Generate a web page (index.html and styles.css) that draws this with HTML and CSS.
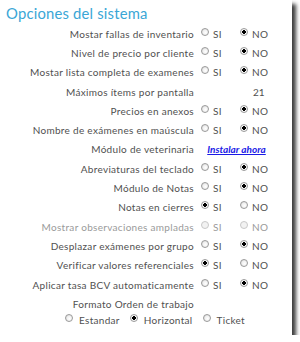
FILE: index.html
```html
<!DOCTYPE html>
<html lang="es">
<head>
<meta charset="utf-8">
<title>Opciones del sistema</title>
<link rel="stylesheet" href="styles.css">
</head>
<body>
<div class="panel">
  <h1 class="title">Opciones del sistema</h1>
  <div class="grid">
    <div class="label">Mostar fallas de inventario</div>
    <label class="opt"><input type="radio" name="r1"><span>SI</span></label>
    <label class="opt"><input type="radio" name="r1" checked><span>NO</span></label>

    <div class="label">Nivel de precio por cliente</div>
    <label class="opt"><input type="radio" name="r2"><span>SI</span></label>
    <label class="opt"><input type="radio" name="r2" checked><span>NO</span></label>

    <div class="label">Mostar lista completa de examenes</div>
    <label class="opt"><input type="radio" name="r3"><span>SI</span></label>
    <label class="opt"><input type="radio" name="r3" checked><span>NO</span></label>

    <div class="label">Máximos ítems por pantalla</div>
    <div></div>
    <div class="num">21</div>

    <div class="label">Precios en anexos</div>
    <label class="opt"><input type="radio" name="r5"><span>SI</span></label>
    <label class="opt"><input type="radio" name="r5" checked><span>NO</span></label>

    <div class="label">Nombre de exámenes en maúscula</div>
    <label class="opt"><input type="radio" name="r6"><span>SI</span></label>
    <label class="opt"><input type="radio" name="r6" checked><span>NO</span></label>

    <div class="label">Módulo de veterinaria</div>
    <div class="span2"><a class="install" href="#">Instalar ahora</a></div>

    <div class="label">Abreviaturas del teclado</div>
    <label class="opt"><input type="radio" name="r8"><span>SI</span></label>
    <label class="opt"><input type="radio" name="r8" checked><span>NO</span></label>

    <div class="label">Módulo de Notas</div>
    <label class="opt"><input type="radio" name="r9"><span>SI</span></label>
    <label class="opt"><input type="radio" name="r9" checked><span>NO</span></label>

    <div class="label">Notas en cierres</div>
    <label class="opt"><input type="radio" name="r10" checked><span>SI</span></label>
    <label class="opt"><input type="radio" name="r10"><span>NO</span></label>

    <div class="label disabled">Mostrar observaciones ampladas</div>
    <label class="opt disabled"><input type="radio" name="r11" disabled><span>SI</span></label>
    <label class="opt disabled"><input type="radio" name="r11" disabled><span>NO</span></label>

    <div class="label">Desplazar exámenes por grupo</div>
    <label class="opt"><input type="radio" name="r12"><span>SI</span></label>
    <label class="opt"><input type="radio" name="r12" checked><span>NO</span></label>

    <div class="label">Verificar valores referenciales</div>
    <label class="opt"><input type="radio" name="r13" checked><span>SI</span></label>
    <label class="opt"><input type="radio" name="r13"><span>NO</span></label>

    <div class="label">Aplicar tasa BCV automaticamente</div>
    <label class="opt"><input type="radio" name="r14"><span>SI</span></label>
    <label class="opt"><input type="radio" name="r14" checked><span>NO</span></label>

    <div class="label">Formato Orden de trabajo</div>
    <div></div>
    <div></div>
  </div>
  <div class="formats">
    <label class="opt"><input type="radio" name="fmt"><span>Estandar</span></label>
    <label class="opt"><input type="radio" name="fmt" checked><span>Horizontal</span></label>
    <label class="opt"><input type="radio" name="fmt"><span>Ticket</span></label>
  </div>
</div>
</body>
</html>
```
FILE: styles.css
```css
html, body {
  margin: 0;
  padding: 0;
  background: #ffffff;
}
body {
  font-family: "Lato", "DejaVu Sans", sans-serif;
  color: #505050;
  font-size: 10px;
}
.panel {
  width: 292px;
  height: 335px;
  background: #ffffff;
  box-shadow: 4px 4px 4px #3c3c3c;
  box-sizing: border-box;
}
.title {
  margin: 0;
  padding: 3px 0 0 6px;
  height: 24px;
  box-sizing: border-box;
  font-size: 14.8px;
  line-height: 20px;
  font-weight: normal;
  color: #3aa6d6;
  letter-spacing: 0.2px;
}
.grid {
  display: grid;
  grid-template-columns: 197px 39px 46px;
  column-gap: 0;
  grid-auto-rows: 19.3px;
  align-items: center;
}
.label {
  text-align: right;
  padding-right: 3px;
  white-space: nowrap;
  letter-spacing: 0.3px;
}
.opt {
  display: flex;
  align-items: center;
  gap: 4px;
  padding-left: 4px;
  letter-spacing: 0.3px;
}
.opt input {
  -webkit-appearance: none;
  appearance: none;
  margin: 0;
  width: 8px;
  height: 8px;
  border-radius: 50%;
  border: 1px solid #9a9a9a;
  background: radial-gradient(circle at 60% 60%, #ffffff 0, #f0f0f0 50%, #cfcfcf 100%);
  box-sizing: border-box;
  position: relative;
  top: -2px;
  flex: none;
}
.opt input:checked {
  background: radial-gradient(circle, #000 0, #000 1.6px, #ffffff 2px, #e8e8e8 100%);
}
.opt input:disabled {
  border-color: #c8c8c8;
  background: #f2f2f2;
}
.disabled {
  color: #9a9a9a;
}
.num {
  padding-left: 17px;
}
.span2 {
  grid-column: span 2;
  text-align: center;
  padding-right: 6px;
}
.install {
  color: #1a1ae6;
  font-style: italic;
  font-weight: bold;
  font-size: 10px;
  text-decoration: underline;
}
.formats {
  display: flex;
  gap: 10px;
  padding-left: 65px;
  margin-top: 1px;
}
.formats .opt {
  padding-left: 0;
  gap: 6px;
}
```
